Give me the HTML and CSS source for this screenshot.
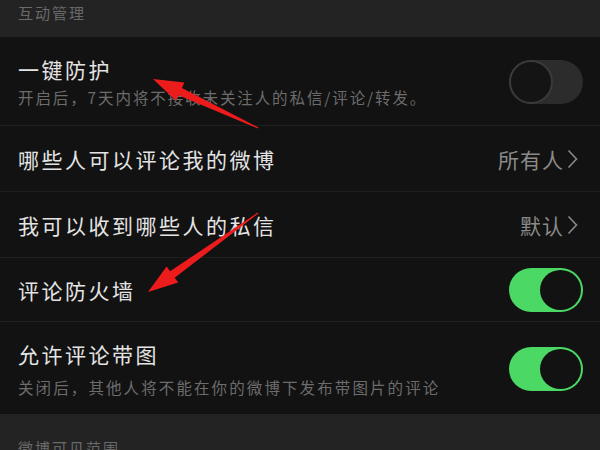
FILE: index.html
```html
<!DOCTYPE html>
<html lang="zh-CN">
<head>
<meta charset="utf-8">
<title>互动管理</title>
<link rel="stylesheet" href="styles.css">
</head>
<body>
<div class="page">
  <div class="section-head">互动管理</div>
  <div class="row row-tall">
    <div class="text">
      <div class="title">一键防护</div>
      <div class="sub">开启后，7天内将不接收未关注人的私信/评论/转发。</div>
    </div>
    <div class="switch"><span class="knob"></span></div>
  </div>
  <div class="row row-mid">
    <div class="title">哪些人可以评论我的微博</div>
    <div class="value">所有人<svg class="chev" viewBox="0 0 11 20" width="11" height="20"><path d="M1.5 1.5 L9.5 10 L1.5 18.5" fill="none" stroke="#8a8a8a" stroke-width="1.6"/></svg></div>
  </div>
  <div class="row row-mid">
    <div class="title">我可以收到哪些人的私信</div>
    <div class="value">默认<svg class="chev" viewBox="0 0 11 20" width="11" height="20"><path d="M1.5 1.5 L9.5 10 L1.5 18.5" fill="none" stroke="#8a8a8a" stroke-width="1.6"/></svg></div>
  </div>
  <div class="row row-short">
    <div class="title">评论防火墙</div>
    <div class="switch on"><span class="knob"></span></div>
  </div>
  <div class="row row-last">
    <div class="text">
      <div class="title">允许评论带图</div>
      <div class="sub sub-gap">关闭后，其他人将不能在你的微博下发布带图片的评论</div>
    </div>
    <div class="switch on"><span class="knob"></span></div>
  </div>
  <div class="section-head section-bottom">微博可见范围</div>

  <svg class="arrows" width="600" height="450" viewBox="0 0 600 450">
    <polygon fill="#ec1c1c" points="153,79 184.4,82.6 181.9,88.1 258.4,127.6 257.8,128.4 178.5,95.3 176,100.8"/>
    <polygon fill="#ec1c1c" points="148,292 166.6,266.4 170.1,271.3 257.6,212.6 258.4,213.4 174.7,277.7 178.2,282.6"/>
  </svg>
</div>
</body>
</html>
```

FILE: styles.css
```css
* { box-sizing: border-box; }
html, body {
  margin: 0;
  padding: 0;
  background: #121212;
}
body {
  font-family: "Noto Sans CJK SC", "Noto Sans", sans-serif;
  width: 600px;
  height: 450px;
  overflow: hidden;
}
.page {
  position: relative;
  width: 600px;
  height: 450px;
}
.section-head {
  height: 37px;
  background: #232323;
  color: #696969;
  font-size: 15px;
  letter-spacing: 2px;
  line-height: 26px;
  padding-left: 18px;
}
.section-bottom {
  height: 36px;
  padding-top: 21px;
}
.row {
  display: flex;
  align-items: center;
  justify-content: space-between;
  padding: 0 17px 0 18px;
  border-bottom: 1px solid #1f1f1f;
}
.row-tall { height: 89px; padding-top: 2px; }
.row-mid { height: 66px; padding-right: 22px; }
.row-short { height: 64px; }
.row-last { height: 92px; border-bottom: none; padding-top: 2px; }
.text {
  display: flex;
  flex-direction: column;
}
.title {
  color: #e4e4e4;
  font-size: 21px;
  letter-spacing: 2.5px;
  line-height: 30px;
}
.sub {
  color: #6c6c6c;
  font-size: 15.5px;
  letter-spacing: 1.9px;
  line-height: 26px;
  white-space: nowrap;
}
.sub-gap { margin-top: 5px; letter-spacing: 2.1px; }
.value {
  display: flex;
  align-items: center;
  color: #8a8a8a;
  font-size: 21px;
  letter-spacing: 1px;
  line-height: 30px;
}
.chev { margin-left: 3px; }
.switch {
  position: relative;
  width: 74px;
  height: 44px;
  border-radius: 22px;
  background: #2c2c2c;
  flex: none;
}
.switch .knob {
  position: absolute;
  left: 0;
  top: 0;
  width: 44px;
  height: 44px;
  border-radius: 50%;
  background: #141414;
  border: 2px solid #3a3a3a;
}
.switch.on {
  background: #4cd864;
}
.switch.on .knob {
  left: 31px;
  top: 2px;
  width: 41px;
  height: 40px;
  background: #121212;
  border: none;
}
.arrows {
  position: absolute;
  left: 0;
  top: 0;
  pointer-events: none;
}
```
